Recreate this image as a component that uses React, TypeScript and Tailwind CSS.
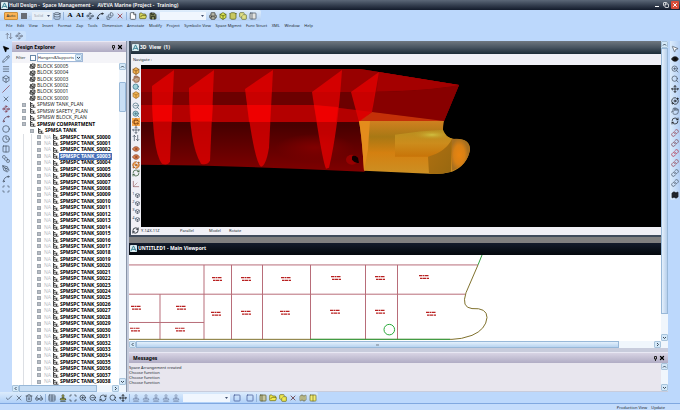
import React from "react";
import {
  ArrowUpDown,
  Axis3d,
  Box,
  Check,
  Circle,
  Clock,
  Columns2,
  Copy,
  Cylinder,
  Database,
  Eye,
  File,
  FileStack,
  FolderOpen,
  Glasses,
  Hand,
  Link,
  Map,
  Menu,
  MousePointer2,
  Move,
  Orbit,
  PanelLeft,
  Pencil,
  PenTool,
  Printer,
  RefreshCw,
  Rotate3d,
  Save,
  Scan,
  Search,
  Slash,
  Spline,
  Square,
  SquareStack,
  Stamp,
  Table,
  Trash2,
  Waypoints,
  X,
  ZoomIn,
  ZoomOut,
} from "lucide-react";

type Tool = {
  label: string;
  icon?: React.ElementType;
  glyph?: string;
  color?: string;
  fill?: string;
};

type TreeRow = {
  name: string;
  kind: "block" | "plan" | "group" | "type" | "tank";
};

const menus = [
  "File",
  "Edit",
  "View",
  "Insert",
  "Format",
  "Zap",
  "Tools",
  "Dimension",
  "Annotate",
  "Modify",
  "Project",
  "Symbolic View",
  "Space Mgmnt",
  "Func Struct",
  "XML",
  "Window",
  "Help",
];

const textTools: Tool[] = [
  { label: "Text", glyph: "A", color: "text-black" },
  { label: "Edit text", glyph: "AI", color: "text-black" },
  { label: "Move text", icon: Waypoints },
  { label: "Text style", icon: Spline, color: "text-black" },
  { label: "Copy text", icon: FileStack },
  { label: "Delete", icon: X, color: "text-[#981818]" },
];

const fileTools: Tool[] = [
  { label: "New", icon: File, color: "text-[#283038]", fill: "#ffffff" },
  { label: "Open", icon: FolderOpen, color: "text-[#4c4c14]", fill: "#d8d860" },
  { label: "Save", icon: Save, color: "text-black", fill: "#889060" },
];

const printTools: Tool[] = [
  { label: "Print", icon: Printer, color: "text-[#303030]", fill: "#b8b8a8" },
  { label: "Model", icon: Box, color: "text-[#4c5410]", fill: "#d8e050" },
  { label: "Drawing", icon: Cylinder, color: "text-[#4c5410]", fill: "#c8c860" },
  { label: "Sheets", icon: Copy, color: "text-[#5c6420]", fill: "#e0e088" },
  { label: "Panel", icon: PanelLeft, fill: "#e4e4e0" },
];

const drawTools: Tool[] = [
  { label: "Select", icon: MousePointer2, color: "text-black", fill: "#000000" },
  { label: "Draw", icon: Pencil },
  { label: "Layers", icon: Menu },
  { label: "Solid", icon: Box },
  { label: "Line", icon: Slash, color: "text-[#803848]" },
  { label: "Cross", icon: X },
  { label: "Polyline", icon: Waypoints, color: "text-[#803848]" },
  { label: "Point", icon: Spline, color: "text-[#603848]" },
  { label: "Circle", icon: Circle },
  { label: "Arc", icon: Clock },
  { label: "Parallel", icon: Columns2 },
  { label: "Duplicate", icon: SquareStack },
  { label: "Measure", icon: PenTool },
  { label: "Curve", icon: Spline },
  { label: "Trim", icon: Scan },
];

const viewToolGroups: Tool[][] = [
  [
    { label: "Pick", icon: MousePointer2, fill: "#ffffff" },
    { label: "Camera", icon: Eye, color: "text-black", fill: "#202020" },
    { label: "Zoom window", icon: ZoomIn },
    { label: "Zoom", icon: Search },
    { label: "Pan", icon: Move, color: "text-black" },
  ],
  [
    { label: "Spin", icon: Orbit, color: "text-black" },
    { label: "Walk", icon: Hand },
    { label: "Look", icon: RefreshCw, color: "text-black" },
  ],
  [
    { label: "Add", icon: Link, color: "text-[#8c3040]" },
    { label: "Add all", icon: Link, color: "text-[#6c3040]" },
    { label: "Remove", icon: Link, color: "text-[#b02038]" },
    { label: "Remove all", icon: Link, color: "text-[#8c3040]" },
    { label: "Attach", icon: Link },
    { label: "Connect", icon: Link },
  ],
  [{ label: "Screen", icon: Map, color: "text-black", fill: "#303840" }],
];

const navToolGroups: Tool[][] = [
  [
    { label: "Limits", icon: Box, color: "text-[#80501c]", fill: "#f0b050" },
    { label: "Limits to pick", icon: Hand, color: "text-[#804830]", fill: "#c8a080" },
    { label: "Zoom to pick", icon: Search, color: "text-[#2c6880]", fill: "#a0d0d8" },
    { label: "Shaded", icon: Box, color: "text-[#a07028]", fill: "#f0b050" },
  ],
  [
    { label: "Zoom out", icon: ZoomOut, color: "text-[#406878]" },
    { label: "Zoom in", icon: ZoomIn, color: "text-[#406878]", fill: "#a0d0d8" },
    { label: "Rotate model", icon: Rotate3d, color: "text-[#6c3000]" },
    { label: "Centre", icon: Move },
    { label: "Walk up", icon: ArrowUpDown },
  ],
  [
    { label: "Look at", icon: Eye, color: "text-[#803018]", fill: "#e89058" },
    { label: "Look from", icon: Eye, color: "text-[#803018]", fill: "#e89058" },
    { label: "Look through", icon: Orbit, color: "text-[#a05010]", fill: "#f0a050" },
    { label: "Refresh", icon: RefreshCw, color: "text-[#204820]" },
  ],
  [{ label: "Axes", icon: Axis3d, color: "text-[#905858]" }],
  [
    { label: "Store view 1", icon: Box, glyph: "1" },
    { label: "Store view 2", icon: Box, glyph: "2" },
    { label: "Store view 3", icon: Box, glyph: "3" },
    { label: "Store view 4", icon: Box, glyph: "4" },
  ],
];

const editTools: Tool[] = [
  { label: "Accept", icon: Check },
  { label: "Cancel", icon: X },
  { label: "Discard", icon: Trash2 },
  { label: "Options", icon: Glasses },
];

const zoomTools: Tool[] = [
  { label: "Stamp", icon: Stamp, color: "text-[#202810]", fill: "#c8c860" },
  { label: "Fit", icon: Scan, color: "text-[#202830]" },
  { label: "Zoom in", icon: ZoomIn, color: "text-[#202830]" },
  { label: "Zoom out", icon: ZoomOut, color: "text-[#202830]" },
  { label: "Refresh", icon: RefreshCw, color: "text-[#202830]" },
  { label: "Previous", icon: Search, color: "text-[#202830]" },
  { label: "Pan", icon: Move, color: "text-black" },
];

const layerTools: Tool[] = [
  { label: "Layer 1", icon: Stamp, color: "text-[#7080a0]" },
  { label: "Layer 2", icon: Stamp, color: "text-[#7080a0]" },
  { label: "Layer 3", icon: Stamp, color: "text-[#7080a0]" },
  { label: "Layer 4", icon: Stamp, color: "text-[#7080a0]" },
  { label: "Layer 5", icon: Stamp, color: "text-[#7080a0]" },
];

const spaceTools: Tool[] = [
  { label: "Space plan", icon: PanelLeft, color: "text-[#505020]", fill: "#c8c8a0" },
  { label: "Open space", icon: FolderOpen, color: "text-[#606008]", fill: "#f0e850" },
  { label: "Copy space", icon: Copy, color: "text-[#606008]", fill: "#f0e850" },
  { label: "Delete space", icon: X, color: "text-[#501010]" },
  { label: "Split space", icon: Map, color: "text-[#606040]", fill: "#e0e0a8" },
  { label: "Merge space", icon: Columns2, color: "text-[#686820]", fill: "#f4ec70" },
];

const treeRows: TreeRow[] = [
  ...[5, 4, 3, 2, 1, 0].map(
    (n): TreeRow => ({ name: `BLOCK S000${n}`, kind: "block" })
  ),
  { name: "SPMSW TANK_PLAN", kind: "plan" },
  { name: "SPMSW SAFETY_PLAN", kind: "plan" },
  { name: "SPMSW BLOCK_PLAN", kind: "plan" },
  { name: "SPMSW COMPARTMENT", kind: "group" },
  { name: "SPMSA TANK", kind: "type" },
  ...Array.from(
    { length: 39 },
    (_, n): TreeRow => ({
      name: `SPMSPC TANK_S00${String(n).padStart(2, "0")}`,
      kind: "tank",
    })
  ),
];

const rowIndent: Record<TreeRow["kind"], string> = {
  block: "pl-[17px]",
  plan: "pl-[10px]",
  group: "pl-[10px]",
  type: "pl-[18px]",
  tank: "",
};

const messages = [
  "Space Arrangement created",
  "Choose function",
  "Choose function",
  "Choose function",
];

// Centre points of the compartment name tags
const tags = [
  [217, 278], [246, 278], [286, 278], [336, 277], [380, 277], [424, 276],
  [216, 313], [246, 312], [285, 312], [335, 311], [380, 311], [431, 313],
  [136, 307], [181, 307], [135, 329], [180, 329],
];

const ToolButton: React.FC<{ tool: Tool; className?: string }> = ({
  tool,
  className = "h-[10px] w-[10px]",
}) => {
  const Icon = tool.icon;
  return (
    <button
      type="button"
      aria-label={tool.label}
      className={`flex shrink-0 items-center justify-center ${className} ${
        tool.color || "text-[#3c4858]"
      }`}
    >
      {tool.glyph && (
        <span className={Icon ? "self-start text-[4px]" : "font-['Liberation_Serif',serif] text-[7px] font-bold"}>
          {tool.glyph}
        </span>
      )}
      {Icon && (
        <Icon
          size={tool.glyph ? 5 : 8}
          strokeWidth={tool.glyph ? 3 : 2}
          fill={tool.fill || "none"}
          className="shrink-0"
        />
      )}
    </button>
  );
};

const ToolGroup: React.FC<{ tools: Tool[] }> = ({ tools }) => (
  <>
    {tools.map((tool) => (
      <ToolButton key={tool.label} tool={tool} />
    ))}
  </>
);

const Separator = () => (
  <span className="mx-px h-[8px] w-px shrink-0 bg-[#94b4dc]" />
);

const Combo: React.FC<{ label: string; value?: string; className: string }> = ({
  label,
  value,
  className,
}) => (
  <span className={`flex h-[8px] shrink-0 items-center ${className}`}>
    <select aria-label={label} className="h-full min-w-0 flex-1 appearance-none pl-[2px] text-[4px]">
      <option>{value}</option>
    </select>
    <svg viewBox="0 0 5 4" className="mr-px h-[4px] w-[5px] shrink-0">
      <path d="M1 1 H4 L2.5 3 Z" fill="#405070" />
    </svg>
  </span>
);

const AppLogo = () => (
  <svg viewBox="0 0 8 8" className="h-[7px] w-[7px] shrink-0">
    <rect width="8" height="8" rx="1" fill="#dcecf0" />
    <path d="M1 7 L4 1 L7 7 M2.5 5 H6" stroke="#28788c" fill="none" />
  </svg>
);

const ScrollArrow: React.FC<{ dir: "up" | "down" | "left" | "right" }> = ({
  dir,
}) => {
  const paths = {
    up: "M2 4.5 L3.5 3 L5 4.5",
    down: "M2 3 L3.5 4.5 L5 3",
    left: "M4.5 2 L3 3.5 L4.5 5",
    right: "M3 2 L4.5 3.5 L3 5",
  };
  return (
    <button
      type="button"
      aria-label={`Scroll ${dir}`}
      className="h-[7px] w-[7px] shrink-0 rounded-[1px] border border-[#a8c4dc] bg-[#d4e8f8]"
    >
      <svg viewBox="1 1 5 5" className="h-[5px] w-[5px]">
        <path d={paths[dir]} stroke="#384858" fill="none" />
      </svg>
    </button>
  );
};

const PanelHeader: React.FC<{ title: string }> = ({ title }) => (
  <header className="flex h-[11px] shrink-0 items-center border-t border-[#e8e8f4] bg-linear-to-b from-[#d8d4e4] to-[#b0acc4] pr-[2px] pl-[4px] text-black">
    <h2 className="flex-1 text-[5px] font-bold">{title}</h2>
    <button type="button" aria-label={`Pin ${title}`} className="w-[7px]">
      <svg viewBox="0 0 7 7" className="h-[7px] w-[7px]">
        <path d="M2.5 1.5 H4.5 V4 H2.5 Z M3.5 4 V6" stroke="#222" fill="none" />
      </svg>
    </button>
    <button type="button" aria-label={`Close ${title}`} className="w-[7px]">
      <X size={6} strokeWidth={5} />
    </button>
  </header>
);

const TreeIcon: React.FC<{ kind: TreeRow["kind"] }> = ({ kind }) =>
  kind === "block" ? (
    <svg viewBox="0 0 7 6" className="h-[6px] w-[7px] shrink-0">
      <path
        d="M1 3 L3 .8 L6 1.2 V4 L4 5.5 L1 5 Z M1 3 L4 3.4 L6 1.2 M4 3.4 V5.5 M1 1 L6 5.5"
        stroke="#333"
        strokeWidth=".8"
        fill="#aaa"
      />
    </svg>
  ) : (
    <svg viewBox="0 0 7 6" className="h-[6px] w-[7px] shrink-0">
      <path
        d="M1.5 0 V5.2 H6.5 M1.5 1.5 H3.5 M1.5 3.2 H5.5 M4.5 3 V5"
        stroke="#444"
        fill="none"
      />
    </svg>
  );

const TreeItem: React.FC<{ row: TreeRow }> = ({ row }) => {
  const bold = !["block", "plan"].includes(row.kind);
  const selected = row.name === "SPMSPC TANK_S0003";
  return (
    <li
      className={`flex min-h-0 flex-1 items-center text-[5px] whitespace-nowrap ${
        rowIndent[row.kind]
      } ${bold ? "font-bold text-black" : "text-[#282828]"}`}
    >
      {row.kind === "tank" && (
        <>
          <span className="w-[12px] shrink-0 self-stretch border-r border-[#dcdfe4]" />
          <span className="mr-[5px] w-[8px] shrink-0 self-stretch border-r border-[#dcdfe4]" />
        </>
      )}
      {row.kind !== "block" && (
        <button
          type="button"
          aria-label={`Expand ${row.name}`}
          className="mr-[3px] h-[4px] w-[4px] shrink-0 border border-[#a0a8b0] bg-[#b8bcc4]"
        />
      )}
      {row.kind === "tank" && (
        <span className="w-[8px] font-normal text-[#b8bcc4]">NA</span>
      )}
      <TreeIcon kind={row.kind} />
      <span
        className={`flex items-center self-stretch px-px ${
          selected ? "bg-[#4870b8] text-white" : ""
        }`}
      >
        {row.name}
      </span>
    </li>
  );
};

const HullModel = () => (
  <svg
    viewBox="141 65 520 162"
    preserveAspectRatio="none"
    className="absolute inset-0 h-full w-full"
    role="img"
    aria-label="Shaded hull model"
  >
    <defs>
      <linearGradient id="lower" x1="0" y1="0" x2="0" y2="1">
        <stop offset="0" stopColor="#500000" />
        <stop offset=".55" stopColor="#480000" />
        <stop offset="1" stopColor="#800000" />
      </linearGradient>
      <radialGradient id="glow">
        <stop offset="0" stopColor="#800000" />
        <stop offset="1" stopColor="#800000" stopOpacity="0" />
      </radialGradient>
      <linearGradient id="orange" x1="0" y1="0" x2="0" y2="1">
        <stop offset="0" stopColor="#d08020" />
        <stop offset=".3" stopColor="#a87814" />
        <stop offset=".6" stopColor="#d48010" />
        <stop offset="1" stopColor="#cc9024" />
      </linearGradient>
      <linearGradient id="inner" x1="0" y1="0" x2="0" y2="1">
        <stop offset="0" stopColor="#b89020" />
        <stop offset=".5" stopColor="#cc8c1c" />
        <stop offset="1" stopColor="#c87408" />
      </linearGradient>
      <linearGradient id="stem" x1="0" y1="0" x2="1" y2="1">
        <stop offset="0" stopColor="#b07010" />
        <stop offset="1" stopColor="#986810" />
      </linearGradient>
      <radialGradient id="bulb" cx=".4">
        <stop offset="0" stopColor="#e88410" />
        <stop offset=".6" stopColor="#d88014" />
        <stop offset="1" stopColor="#a87020" />
      </radialGradient>
      <radialGradient id="shine">
        <stop offset="0" stopColor="#d0c040" />
        <stop offset="1" stopColor="#c09020" stopOpacity="0" />
      </radialGradient>
    </defs>
    <path d="M141 69 H360 L459 85 L444 121 L364 172 Q250 166 141 165 Z" fill="url(#lower)" />
    <ellipse cx="315" cy="148" rx="40" ry="14" fill="url(#glow)" />
    <path d="M141 69 H360 L459 85 L444 121 H141 Z" fill="#800000" />
    <path d="M141 69 H360 L459 85 Q425 92 374 92 L213 92 H141 Z" fill="#980000" />
    <path d="M213 92 H374 Q425 91 459 85 L444 121 L372 112 L315 105 H213 Z" fill="#6c0000" />
    <path d="M141 105 H315 L372 112 L359 122 H141 Z" fill="#b40000" />
    <path d="M374 92 Q425 91 459 85 L444 121 L372 112 Z" fill="#880000" />
    <path d="M360 69 L459 85 Q425 91 377 91 L379 72 Z" fill="#a40000" />
    <path d="M372 112 L444 121 H359 Z" fill="#c43008" />
    <g fill="#e80000" fillOpacity=".75">
      <path d="M152 86 L174 70 L170 162 Q168 166 162 164 Q152 152 152 86 Z" />
      <path d="M189 88 L214 70 L210 161 Q207 166 201 164 Q189 144 189 88 Z" />
      <path d="M245 89 L273 70 L269 148 Q266 166 261 167 Q254 162 245 89 Z" />
      <path d="M312 92 L342 70 Q338 130 329 168 L326 169 Q322 160 312 92 Z" />
      <path d="M351 92 L379 72 L372 112 L359 122 Z" />
    </g>
    <g fill="#ff0000" fillOpacity=".55">
      <path d="M152 105 H172 V121 H153 Z" />
      <path d="M190 105 H213 L212 121 H191 Z" />
      <path d="M247 105 H271 L270 122 H249 Z" />
      <path d="M314 105 L338 107 L336 122 H317 Z" />
    </g>
    <ellipse cx="352" cy="160" rx="6" ry="5" fill="#980000" />
    <path d="M352 157 Q354 154 358 158 L359 163 Q355 164 352 160 Z" fill="#100000" />
    <path
      d="M359 121 H444 L443 130 Q446 138 454 139 Q470 138 470 150 Q467 166 452 172 Q440 175 429 174 L364 171 Q362 138 359 121 Z"
      fill="url(#orange)"
    />
    <path d="M359 121 H370 L369 134 L368 150 L364 171 Q362 138 359 121 Z" fill="#e48c1c" />
    <path d="M395 135 Q420 131 444 130 L446 136 L452 139 L451 157 H395 Z" fill="url(#inner)" />
    <path d="M428 157 Q446 152 452 139 L451 172 Q440 175 429 174 Z" fill="url(#stem)" />
    <ellipse cx="432" cy="135" rx="20" ry="5" fill="url(#shine)" />
    <path d="M452 139 Q470 138 470 150 Q467 166 452 171 Z" fill="url(#bulb)" />
    <path d="M444 121 L443 130 Q446 138 454 139 L462 138 L460 124 Z" fill="#000000" />
  </svg>
);

const DeckPlan = () => (
  <svg
    viewBox="129 254 532 87"
    preserveAspectRatio="none"
    className="absolute inset-0 h-full w-full"
    role="img"
    aria-label="Compartment plan"
  >
    <path
      d="M129 264 H478 M129 293.500 H465 M129 322 H204 M160 293.500 V339 M204 264 V339 M231.500 264 V339 M262.500 264 V339 M310.500 264 V339 M365.500 264 V339 M397.500 264 V339"
      stroke="#b86c78"
      fill="none"
    />
    <path
      d="M478 264 L466 292 Q461 307 472 308 Q487 307 487 317 Q486 329 472 335 Q461 339 452 339 H129"
      stroke="#80702c"
      fill="none"
    />
    <path d="M482 254 L478 264 M450 339 H310" stroke="#30a040" fill="none" />
    <circle cx="389.300" cy="329.200" r="5.300" stroke="#28a838" fill="none" />
    {tags.map(([x, y]) => (
      <g key={`${x}-${y}`} transform={`translate(${x} ${y})`} stroke="#b82020" strokeWidth="1.200">
        <path d="M-5 -1.200 H5" strokeDasharray="3 .5 2 .5" />
        <path d="M-4 1.500 H5" strokeDasharray="2 .4 4 .6" />
      </g>
    ))}
  </svg>
);

const App: React.FC = () => {
  return (
    <div className="flex h-screen min-h-[380px] flex-col overflow-hidden bg-[#bcd8fc] font-['Noto_Sans','Open_Sans',sans-serif] text-[4px] leading-none text-[#202830]">
      {/* Title bar */}
      <header className="flex h-[10px] shrink-0 items-center gap-px bg-linear-to-b from-[#5c6878] to-[#141c2c] pl-[1px] text-white">
        <AppLogo />
        <h1 className="flex-1 text-[5px] font-semibold">
          Hull Design - &nbsp;Space Management - &nbsp; AVEVA Marine (Project - &nbsp;Training)
        </h1>
        <button type="button" aria-label="Minimize" className="flex h-[8px] w-[8px] items-end justify-center pb-[2px]">
          <span className="h-px w-[4px] bg-white" />
        </button>
        <button type="button" aria-label="Restore" className="flex h-[8px] w-[8px] items-center justify-center">
          <Copy size={6} strokeWidth={3} />
        </button>
        <button type="button" aria-label="Close" className="mr-px flex h-[8px] w-[8px] items-center justify-center rounded-[1px] bg-[#d84c38]">
          <X size={6} strokeWidth={4} />
        </button>
      </header>

      {/* Main toolbar */}
      <div className="flex h-[11px] w-[261px] shrink-0 items-center rounded-r-[2px] bg-linear-to-b from-[#e0eefc] to-[#b4d0f4] pl-[4px]">
        <button type="button" className="h-[8px] w-[14px] rounded-[1px] border border-[#c89040] bg-[#fcb454] text-[4px]">
          Auto
        </button>
        <span className="ml-[3px] h-[6px] w-[6px] bg-[#686c74]" />
        <span className="ml-[2px] w-[3px] text-[#889]">-</span>
        <Combo label="Line style" value="Solid" className="w-[20px] bg-[#e8f0f8] text-[#98a0ac]" />
        <ToolButton tool={{ label: "Database", icon: Database }} />
        <Separator />
        <ToolGroup tools={textTools} />
        <Separator />
        <ToolGroup tools={fileTools} />
        <Combo label="Current element" className="mx-[2px] w-[46px] bg-[#f0f6fe]" />
        <ToolGroup tools={printTools} />
      </div>

      {/* Menu */}
      <nav className="flex h-[10px] w-[313px] shrink-0 items-center justify-between pl-[6px]">
        {menus.map((menu) => (
          <button key={menu} type="button" className="whitespace-nowrap">
            {menu}
          </button>
        ))}
      </nav>
      <div className="flex h-[10px] w-[26px] shrink-0 items-center rounded-r-[2px] bg-[#c8e0fc] pl-[4px]">
        <ToolButton tool={{ label: "Dimension", icon: ArrowUpDown, color: "text-[#687080]" }} />
        <ToolButton tool={{ label: "Symbol", icon: Waypoints, color: "text-[#687080]" }} />
      </div>

      <div className="flex min-h-0 flex-1">
        {/* Drawing tools */}
        <div className="flex w-[12px] shrink-0 flex-col items-center bg-[#c4dcfc] pt-[3px]">
          <ToolGroup tools={drawTools} />
        </div>

        {/* Design Explorer */}
        <section className="flex w-[115px] shrink-0 flex-col border-r border-[#8894a8] bg-[#f4f4f8]">
          <PanelHeader title="Design Explorer" />
          <div className="flex h-[11px] shrink-0 items-center pl-[4px]">
            <label htmlFor="filterOn" className="w-[14px]">Filter</label>
            <input id="filterOn" type="checkbox" className="h-[6px] w-[6px] appearance-none border border-[#6888a8] bg-white" />
            <div className="ml-px flex h-[9px] w-[46px] items-center border border-[#a0b8d8] bg-white">
              <select aria-label="Filter type" className="h-full min-w-0 flex-1 appearance-none text-[4px]">
                <option>Hangers&amp;Supports</option>
              </select>
              <ScrollArrow dir="down" />
            </div>
          </div>
          <div className="flex min-h-0 flex-1 bg-white">
            <ul className="flex min-w-0 flex-1 flex-col">
              {treeRows.map((row) => (
                <TreeItem key={row.name} row={row} />
              ))}
            </ul>
            <div className="flex w-[7px] shrink-0 flex-col bg-[#f0f6fc]">
              <ScrollArrow dir="up" />
              <div className="mt-[12px] h-[30px] rounded-[1px] border border-[#98b8d8] bg-[#c8def4]" />
              <div className="flex-1" />
              <ScrollArrow dir="down" />
            </div>
          </div>
          <div className="flex h-[7px] shrink-0 bg-[#f0f6fc] pr-[7px]">
            <ScrollArrow dir="left" />
            <div className="h-full w-[78px] border border-[#98b8d8] bg-[#c8def4]" />
            <div className="flex-1" />
            <ScrollArrow dir="right" />
          </div>
        </section>

        <div className="flex min-w-0 flex-1 flex-col border-l-2 border-[#c4ccdc] bg-[#c8ccdc]">
          <div className="flex min-h-0 flex-1">
            <main className="flex min-w-0 flex-1 flex-col bg-[#808080]">
              {/* 3D View */}
              <section className="flex min-h-0 flex-[195] flex-col border-b-2 border-l-2 border-[#404c5c] bg-[#f0f0f6]">
                <header className="flex h-[13px] shrink-0 items-center gap-px bg-linear-to-b from-[#707880] via-[#485460] to-[#1c2c38] pl-px text-white">
                  <AppLogo />
                  <h2 className="text-[5px] font-bold">3D &nbsp;View &nbsp;(1)</h2>
                </header>
                <div className="flex h-[11px] shrink-0 items-center pl-[2px]">Navigate :</div>
                <div className="flex min-h-0 flex-1">
                  <div className="flex w-[10px] shrink-0 flex-col items-center justify-between pt-[2px] pb-[3px]">
                    {navToolGroups.map((group) => (
                      <div key={group[0].label}>
                        {group.map((tool) => (
                          <ToolButton
                            key={tool.label}
                            tool={tool}
                            className={`h-[8px] w-[8px] ${
                              tool.label === "Rotate model" ? "bg-[#fcac50]" : ""
                            }`}
                          />
                        ))}
                      </div>
                    ))}
                  </div>
                  <div className="relative min-w-0 flex-1 bg-black">
                    <HullModel />
                  </div>
                </div>
                <footer className="flex h-[8px] shrink-0 items-center pl-px">
                  <RefreshCw size={7} strokeWidth={3} />
                  <span className="ml-[2px] w-[39px]">Y-14X-11Z</span>
                  <span className="w-[29px]">Parallel</span>
                  <span className="w-[20px]">Model</span>
                  <span>Rotate</span>
                </footer>
              </section>

              {/* Main Viewport */}
              <section className="mt-[6px] flex min-h-0 flex-[99] flex-col bg-white">
                <header className="flex h-[12px] shrink-0 items-center gap-px bg-linear-to-b from-[#141c2c] to-[#04080c] pl-px text-white">
                  <AppLogo />
                  <h2 className="text-[5px] font-bold">UNTITLED1 - Main Viewport</h2>
                </header>
                <div className="relative min-h-0 flex-1">
                  <DeckPlan />
                </div>
              </section>
            </main>
            <div className="flex w-[7px] shrink-0 flex-col bg-[#f0f6fc]">
              <ScrollArrow dir="up" />
              <div className="flex-1 border border-[#98b8d8] bg-linear-to-r from-[#e4f0fc] to-[#b8d0ec]" />
              <div className="h-[20px]" />
              <ScrollArrow dir="down" />
            </div>
          </div>
          <div className="flex h-[7px] shrink-0 bg-[#f0f6fc] pr-[7px]">
            <ScrollArrow dir="left" />
            <div className="flex flex-1 items-center justify-center border border-[#98b8d8] bg-linear-to-b from-[#e4f0fc] to-[#b8d4f0]">
              <span className="h-[2px] w-[3px] bg-[#a0b0c0]" />
            </div>
            <div className="w-[35px]" />
            <ScrollArrow dir="right" />
          </div>

          {/* Messages */}
          <section className="mt-[4px] mb-px flex shrink-0 flex-col">
            <PanelHeader title="Messages" />
            <div className="flex bg-[#e8e6ee]">
              <ul className="flex-1 pt-[2px] pb-[6px]">
                {messages.map((message, i) => (
                  <li key={i} className="h-[5px] leading-[5px]">{message}</li>
                ))}
              </ul>
              <div className="flex w-[7px] flex-col justify-between bg-[#f0f6fc]">
                <ScrollArrow dir="up" />
                <ScrollArrow dir="down" />
              </div>
            </div>
          </section>
        </div>

        {/* View tools */}
        <aside className="w-[12px] shrink-0 pl-[2px]">
          <div className="flex flex-col items-center gap-[2px] rounded-b-[2px] bg-linear-to-r from-[#dcecfc] to-[#b4d0f4] pt-[3px]">
            {viewToolGroups.map((group) => (
              <div key={group[0].label}>
                <ToolGroup tools={group} />
              </div>
            ))}
          </div>
        </aside>
      </div>

      {/* Bottom toolbar */}
      <div className="flex h-[11px] w-[318px] shrink-0 items-center rounded-r-[2px] bg-linear-to-b from-[#dcecfc] to-[#b0d0f8] pl-[4px]">
        <ToolGroup tools={editTools} />
        <Separator />
        <ToolButton tool={{ label: "Grid", icon: Table }} />
        <span className="w-[2px]" />
        <ToolGroup tools={zoomTools} />
        <Separator />
        <ToolGroup tools={layerTools} />
        <Combo label="Layer" className="mx-[2px] w-[47px] bg-[#f0f6fe]" />
        <ToolButton tool={{ label: "Frame", icon: Square, color: "text-[#384c8c]" }} />
        <span className="w-[6px]" />
        <ToolButton tool={{ label: "Window", icon: Square, color: "text-[#384c8c]" }} />
        <Separator />
        <ToolGroup tools={spaceTools} />
      </div>

      {/* Status bar */}
      <footer className="flex h-[7px] shrink-0 items-end justify-end gap-[4px] border-t border-[#80a8e0] bg-[#c4dcfc] pr-[15px]">
        <span>Production View</span>
        <span>Update</span>
      </footer>
    </div>
  );
};

export default App;
